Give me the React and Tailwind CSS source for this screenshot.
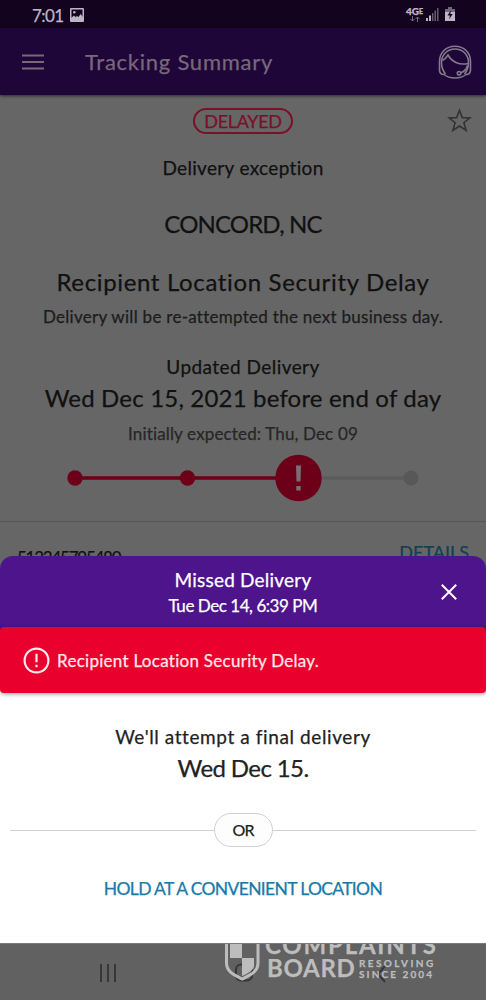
import clsx from "clsx";

const TextRow = ({ className, children }) => (
  <p className={clsx("flex shrink-0 items-center justify-center whitespace-nowrap", className)}>{children}</p>
);

const StatusBar = () => (
  <div className="flex h-7 items-center bg-[#13031f] text-[#bdb4c6]">
    <span className="ml-[32px] mt-[3px] w-[38px] text-[17px] leading-none tracking-[-0.6px]">7:01</span>
    <svg className="mt-px h-[14px] w-[14px]" viewBox="0 0 14 14">
      <rect x="0.75" y="0.75" width="12.5" height="12.5" rx="0.3" fill="none" stroke="currentColor" strokeWidth="1.5" />
      <path d="M1 13V10l3-2.500 1.500 1.500L7 8l1.500 1 2-3L13 9v4Z" fill="currentColor" />
      <circle cx="4.3" cy="4.3" r="1.3" fill="currentColor" />
    </svg>
    <div className="ml-[321px] flex w-[19px] flex-col items-center">
      <span className="flex items-start text-[10px] font-black leading-[8px]">
        4G<span className="text-[7px]">E</span>
      </span>
      <svg className="mt-px h-[6px] w-[12px]" viewBox="0 0 12 6" fill="none" stroke="#776f80">
        <path d="M3.5 0v5M1.5 3l2 2 2-2M8.5 6V1M6.5 3l2-2 2 2" />
      </svg>
    </div>
    <svg className="ml-[2px] h-[13px] w-[13px]" viewBox="0 0 13 13">
      <path d="M0 10h2v3H0ZM3 7.500h2V13H3Z" fill="currentColor" />
      <path d="M6 5h1.500v8H6ZM8.500 2.500H10V13H8.500ZM11 0h1.500v13H11Z" fill="#625a6b" />
    </svg>
    <svg className="ml-[6px] h-[14px] w-[10px]" viewBox="0 0 10 14">
      <path d="M3 0h4v2h3v12H0V2h3Z" fill="currentColor" />
      <path d="M3 0h4v2h3v3H0V2h3Z" fill="#70677a" />
      <path d="M6 3 2.500 8.500H5L4 12.500 7.700 7H5.300Z" fill="#13031f" />
    </svg>
  </div>
);

const AppBar = () => (
  <div className="relative z-10 flex h-[67px] items-center bg-[#1f0638] text-[#77687b] shadow-[0_1px_3px_rgba(0,0,0,0.6)]">
    <svg className="ml-[22px] h-[16px] w-[22px]" viewBox="0 0 22 16" stroke="currentColor" strokeWidth="2">
      <path d="M0 1.500h22M0 8h22M0 14.500h22" />
    </svg>
    <h1 className="ml-[41px] w-[300px] whitespace-nowrap text-[22px] leading-none tracking-[0.75px]">Tracking Summary</h1>
    <svg className="ml-[53px] h-[34px] w-[34px]" viewBox="0 0 34 34" fill="none" stroke="#84798d" strokeWidth="1.600">
      <path d="M6 29.500C2.500 29.500 1.500 27.500 1.500 25V16.500C1.500 7.500 8 1.200 17 1.200S32.500 7.500 32.500 16.500V25c0 2.500-1 4.500-4.500 4.500C25 32 21.500 33 17 33S9 32 6 29.500Z" />
      <path d="M7.500 29C5 26 3.500 22 3.500 17.500 3.500 9.500 9.500 4 17 4s13.500 5.500 13.500 13.500c0 4.500-1.500 8.500-4 11.500" />
      <path d="M4.500 15.500c2.200-1 4-3 5.500-5.500C13.500 16.500 21 20.500 30 18.500M29.500 20.500c-1 3.500-3 6-7 7.500" />
      <circle cx="21" cy="28.200" r="1.700" />
    </svg>
  </div>
);

const ProgressTrack = () => (
  <svg className="mt-2 h-12 w-full shrink-0" viewBox="0 0 486 48">
    <path d="M322 24h88" stroke="#5c5c5c" strokeWidth="3.500" />
    <path d="M75 24h224" stroke="#6c0018" strokeWidth="3.500" />
    <circle cx="75" cy="24" r="7.700" fill="#6c0018" />
    <circle cx="187.500" cy="24" r="7.700" fill="#6c0018" />
    <circle cx="411" cy="24" r="7.500" fill="#585858" />
    <circle cx="298.500" cy="24" r="23.200" fill="#6c0018" />
    <path d="M296 11.500h5l-.5 16h-4ZM296.300 32h4.400v4.500h-4.400Z" fill="#777070" />
  </svg>
);

const TrackingDetails = () => (
  <main className="flex h-[481px] flex-col overflow-hidden bg-[#666666] text-[#111111]">
    <div className="relative mt-[13px] flex h-[26px] shrink-0 justify-center">
      <span className="flex h-[26px] w-[100px] items-center justify-center rounded-full border-2 border-[#7b1029] text-[18px] leading-none tracking-[-0.3px] text-[#7b1029]">
        DELAYED
      </span>
      <svg className="absolute left-[447px] top-0 h-[25px] w-[25px]" viewBox="0 0 25 25" fill="none" stroke="#333333" strokeWidth="1.600">
        <path d="M12.500 2.200 15.300 9.600 23 9.900 16.900 14.700 19.100 22.400 12.500 18 5.900 22.400 8.100 14.700 2 9.900 9.700 9.600Z" />
      </svg>
    </div>
    <TextRow className="mt-5 h-7 text-[19px] tracking-[0.33px]">Delivery exception</TextRow>
    <TextRow className="mt-[26px] h-8 text-[24px] tracking-[-0.85px]">CONCORD, NC</TextRow>
    <TextRow className="mt-[26px] h-8 text-[24px] tracking-[0.65px]">Recipient Location Security Delay</TextRow>
    <TextRow className="mt-[7px] h-6 text-[17px] tracking-[0.28px] text-[#1c1c1c]">
      Delivery will be re-attempted the next business day.
    </TextRow>
    <TextRow className="mt-[26px] h-6 text-[19px] tracking-[0.45px]">Updated Delivery</TextRow>
    <TextRow className="mt-[3px] h-8 text-[24px] tracking-[0.18px]">Wed Dec 15, 2021 before end of day</TextRow>
    <TextRow className="mt-[8px] h-6 text-[17px] tracking-[0.15px] text-[#262626]">Initially expected: Thu, Dec 09</TextRow>
    <ProgressTrack />
    <div className="mt-[19px] h-px shrink-0 bg-[#555555]" />
    <div className="flex shrink-0 items-start justify-between px-[17px]">
      <span className="mt-[26px] text-[17px] leading-5 tracking-[-1.25px]">513345795480</span>
      <span className="mt-[20px] text-[18px] leading-5 text-[#123f55]">DETAILS</span>
    </div>
  </main>
);

const MissedDeliverySheet = () => (
  <section className="relative z-10 -mt-5 h-[387px] overflow-hidden rounded-t-[13px] bg-[#4d148c]">
    <header className="relative flex h-[71px] flex-col text-white">
      <TextRow className="mt-[12px] h-6 text-[19px] tracking-[0.22px]">Missed Delivery</TextRow>
      <TextRow className="mt-[2px] h-6 text-[17px] tracking-[-0.45px]">Tue Dec 14, 6:39 PM</TextRow>
      <svg className="absolute left-[441px] top-[28px] h-4 w-4" viewBox="0 0 16 16" stroke="currentColor" strokeWidth="2">
        <path d="m.8.8 14.400 14.400M15.200.8.8 15.200" />
      </svg>
    </header>
    <div className="relative z-10 flex h-[66px] items-center rounded-[4px] bg-[#ea002c] text-[#ffe8ee] shadow-[0_1px_4px_rgba(0,0,0,0.4)]">
      <svg className="ml-[23px] h-[27px] w-[27px]" viewBox="0 0 27 27" fill="none" stroke="currentColor" strokeWidth="2.200">
        <circle cx="13.500" cy="13.500" r="11.900" />
        <path d="M13.500 6.800v8.400M13.500 17.800v2.400" />
      </svg>
      <span className="ml-[7px] whitespace-nowrap text-[17px] leading-none tracking-[0.28px]">Recipient Location Security Delay.</span>
    </div>
    <div className="-mt-1 flex h-[254px] flex-col bg-white pt-1 text-[#222222]">
      <TextRow className="mt-[32px] h-6 text-[19px] tracking-[0.6px]">We'll attempt a final delivery</TextRow>
      <TextRow className="mt-[3px] h-8 text-[24px] tracking-[-0.6px]">Wed Dec 15.</TextRow>
      <div className="mx-[10px] mt-[29px] flex items-center">
        <div className="h-px flex-1 bg-[#d0d0d0]" />
        <span className="flex h-[34px] w-[59px] items-center justify-center rounded-full border border-[#d0d0d0] bg-[#fdfdfd] text-[16px] tracking-[-1px]">OR</span>
        <div className="h-px flex-1 bg-[#d0d0d0]" />
      </div>
      <TextRow className="mt-[30px] h-6 text-[17.5px] tracking-[-0.67px] text-[#187aa9]">HOLD AT A CONVENIENT LOCATION</TextRow>
    </div>
  </section>
);

const Watermark = () => (
  <div className="absolute left-[225px] top-[-8px] flex text-[#bdbdbd]">
    <svg className="h-[46px] w-[35px] shrink-0" viewBox="0 0 35 46">
      <path d="M5 2h12v20H5ZM17 22h12v8c0 4-7 8-12 10Z" fill="currentColor" />
      <path d="M1.500 0v27c0 9 8 12 15.700 16C25 39 33 36 33 27V0" fill="none" stroke="currentColor" strokeWidth="3" />
    </svg>
    <div className="ml-[5px] mt-[-3px] flex flex-col font-bold">
      <span className="h-[23px] whitespace-nowrap text-[24px] leading-[23px] tracking-[1.8px]">COMPLAINTS</span>
      <div className="flex">
        <span className="ml-[2px] w-[92px] text-[24px] leading-[24px] tracking-[0.7px]">BOARD</span>
        <div className="mt-[2px] flex flex-col whitespace-nowrap text-[10px] leading-[11px]">
          <span className="tracking-[2.4px]">RESOLVING</span>
          <span className="tracking-[2.1px]">SINCE 2004</span>
        </div>
      </div>
    </div>
  </div>
);

const NavigationBar = () => (
  <nav className="relative h-[57px] overflow-hidden border-t border-[#7a7a7a] bg-[#616161]">
    <svg className="h-full w-full" viewBox="0 0 486 56" fill="none" stroke="#373737" strokeWidth="2">
      <path d="M101 20v18M108 20v18M115 20v18" />
      <rect x="236" y="20.500" width="16" height="16" rx="5" />
      <path d="m385 22-7 8 7 8" />
    </svg>
    <Watermark />
  </nav>
);

export default function App() {
  return (
    <div className="h-[1000px] w-[486px] overflow-hidden bg-[#666666] font-[Lato,'Open_Sans',sans-serif] [-webkit-text-stroke:0.25px]">
      <StatusBar />
      <AppBar />
      <TrackingDetails />
      <MissedDeliverySheet />
      <NavigationBar />
    </div>
  );
}
